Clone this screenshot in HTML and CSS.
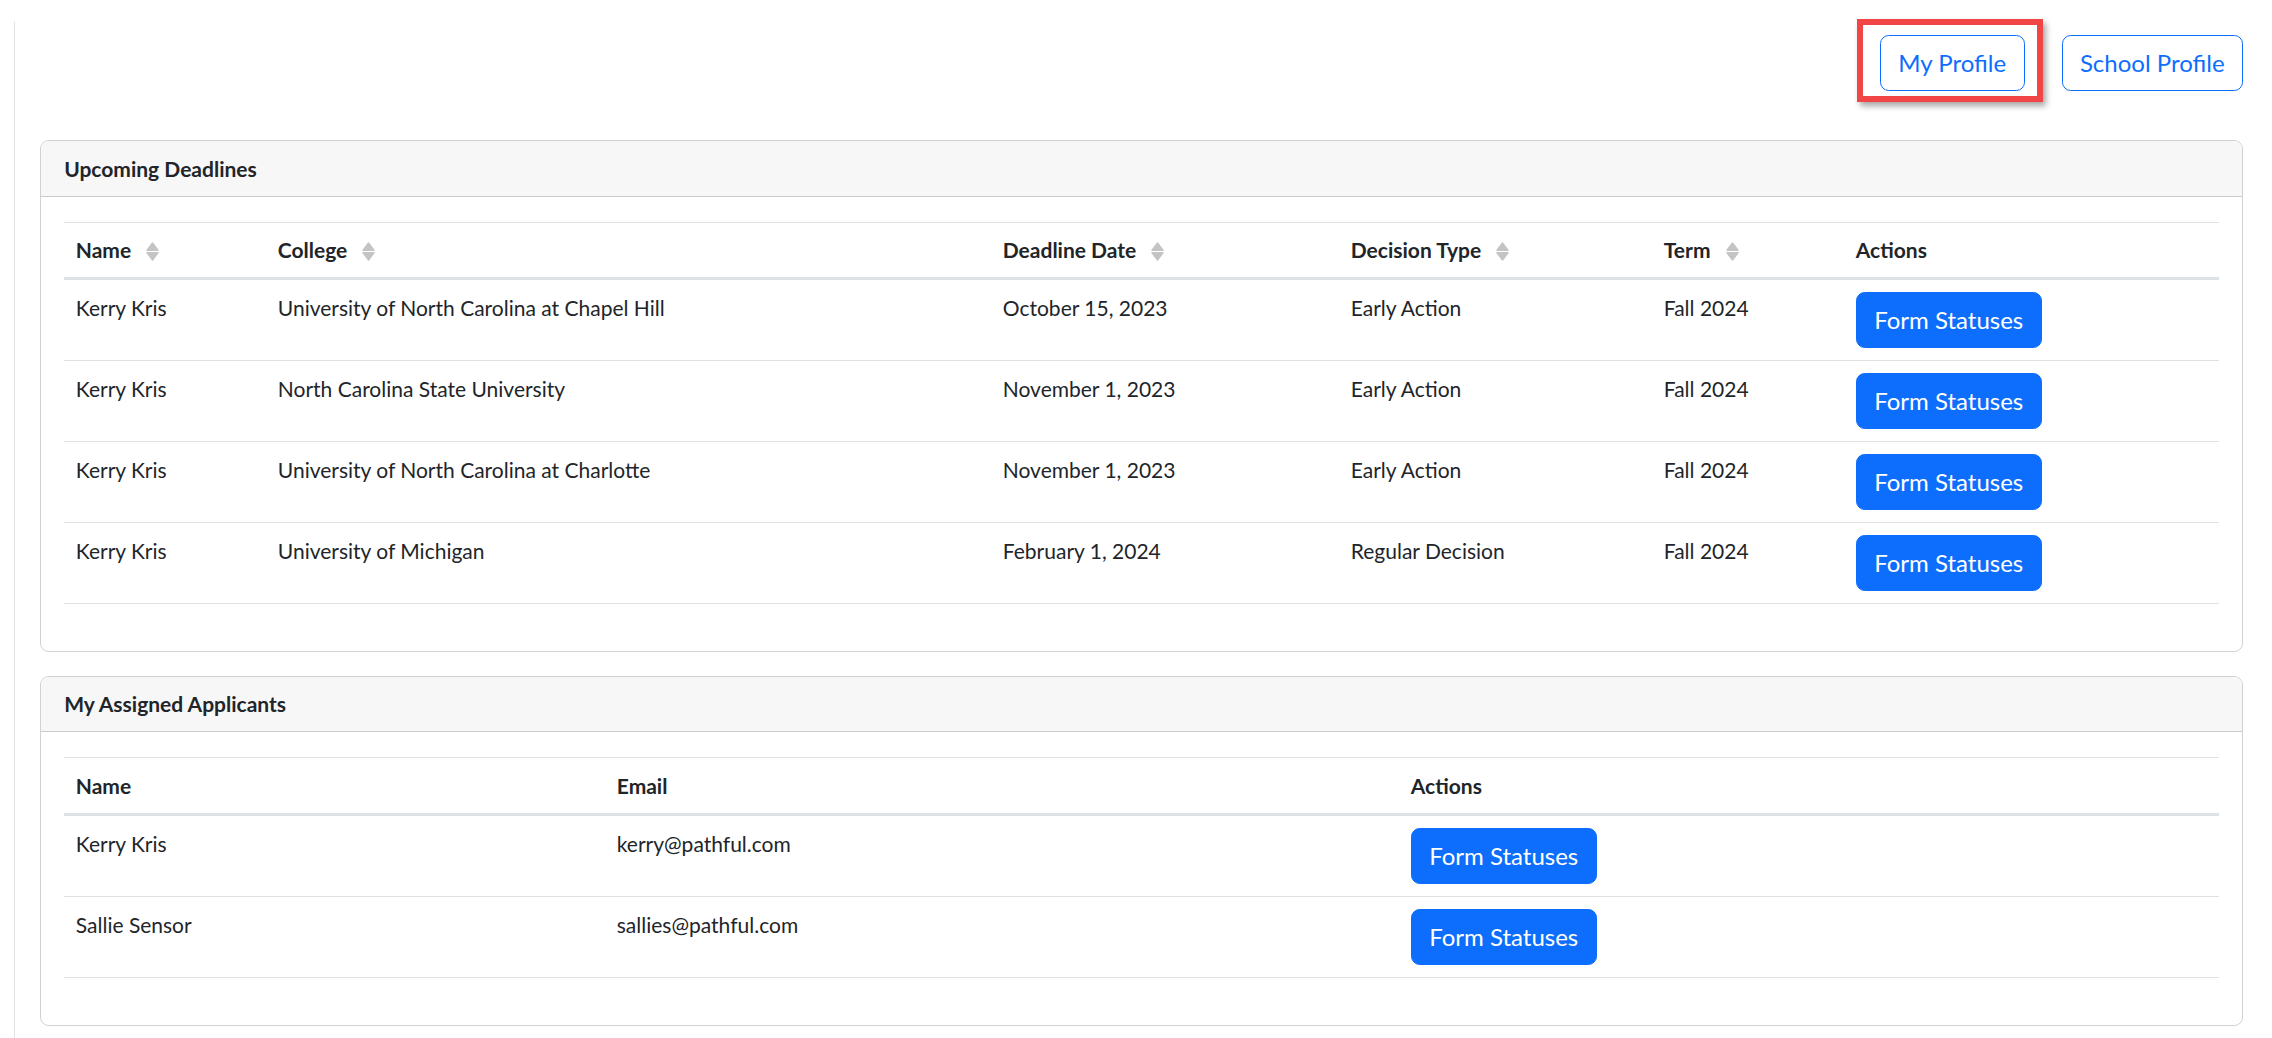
FILE: index.html
```html
<!DOCTYPE html>
<html lang="en">
<head>
    <meta charset="UTF-8">
    <meta name="viewport" content="width=device-width, initial-scale=1.0">
    <title>Counselor Dashboard</title>
    <link rel="stylesheet" href="styles.css">
</head>
<body>

<div class="main">
    <div class="toolbar">
        <span class="highlight">
            <button class="btn btn-outline">My Profile</button>
        </span>
        <button class="btn btn-outline">School Profile</button>
    </div>

    <div class="card">
        <div class="card-header">Upcoming Deadlines</div>
        <div class="card-body">
            <table class="table">
                <colgroup>
                    <col style="width: 202px">
                    <col style="width: 725px">
                    <col style="width: 348px">
                    <col style="width: 313px">
                    <col style="width: 192px">
                    <col>
                </colgroup>
                <thead>
                    <tr>
                        <th>Name <svg class="sort" viewBox="0 0 13 19"><path d="M6.5 1 L12 8.2 L1 8.2 Z M1 10.8 L12 10.8 L6.5 18 Z"/></svg></th>
                        <th>College <svg class="sort" viewBox="0 0 13 19"><path d="M6.5 1 L12 8.2 L1 8.2 Z M1 10.8 L12 10.8 L6.5 18 Z"/></svg></th>
                        <th>Deadline Date <svg class="sort" viewBox="0 0 13 19"><path d="M6.5 1 L12 8.2 L1 8.2 Z M1 10.8 L12 10.8 L6.5 18 Z"/></svg></th>
                        <th>Decision Type <svg class="sort" viewBox="0 0 13 19"><path d="M6.5 1 L12 8.2 L1 8.2 Z M1 10.8 L12 10.8 L6.5 18 Z"/></svg></th>
                        <th>Term <svg class="sort" viewBox="0 0 13 19"><path d="M6.5 1 L12 8.2 L1 8.2 Z M1 10.8 L12 10.8 L6.5 18 Z"/></svg></th>
                        <th>Actions</th>
                    </tr>
                </thead>
                <tbody>
                    <tr>
                        <td>Kerry Kris</td>
                        <td>University of North Carolina at Chapel Hill</td>
                        <td>October 15, 2023</td>
                        <td>Early Action</td>
                        <td>Fall 2024</td>
                        <td><button class="btn btn-primary">Form Statuses</button></td>
                    </tr>
                    <tr>
                        <td>Kerry Kris</td>
                        <td>North Carolina State University</td>
                        <td>November 1, 2023</td>
                        <td>Early Action</td>
                        <td>Fall 2024</td>
                        <td><button class="btn btn-primary">Form Statuses</button></td>
                    </tr>
                    <tr>
                        <td>Kerry Kris</td>
                        <td>University of North Carolina at Charlotte</td>
                        <td>November 1, 2023</td>
                        <td>Early Action</td>
                        <td>Fall 2024</td>
                        <td><button class="btn btn-primary">Form Statuses</button></td>
                    </tr>
                    <tr>
                        <td>Kerry Kris</td>
                        <td>University of Michigan</td>
                        <td>February 1, 2024</td>
                        <td>Regular Decision</td>
                        <td>Fall 2024</td>
                        <td><button class="btn btn-primary">Form Statuses</button></td>
                    </tr>
                </tbody>
            </table>
        </div>
    </div>

    <div class="card">
        <div class="card-header">My Assigned Applicants</div>
        <div class="card-body">
            <table class="table">
                <colgroup>
                    <col style="width: 541px">
                    <col style="width: 794px">
                    <col>
                </colgroup>
                <thead>
                    <tr>
                        <th>Name</th>
                        <th>Email</th>
                        <th>Actions</th>
                    </tr>
                </thead>
                <tbody>
                    <tr>
                        <td>Kerry Kris</td>
                        <td>kerry@pathful.com</td>
                        <td><button class="btn btn-primary">Form Statuses</button></td>
                    </tr>
                    <tr>
                        <td>Sallie Sensor</td>
                        <td>sallies@pathful.com</td>
                        <td><button class="btn btn-primary">Form Statuses</button></td>
                    </tr>
                </tbody>
            </table>
        </div>
    </div>
</div>

</body>
</html>
```

FILE: styles.css
```css
body {
    margin: 0;
    font-family: Lato, "Open Sans", sans-serif;
    font-size: 21px;
    line-height: 1.5;
    color: #212529;
    background-color: #fff;
}
.main {
    margin: 22px 0 0 14px;
    min-height: 1016px;
    box-sizing: border-box;
    border-left: 1px solid #e3e3e3;
    padding: 13px 29px 10px 25px;
}
.toolbar {
    display: flex;
    justify-content: flex-end;
    gap: 37px;
    margin-bottom: 49px;
}
.highlight {
    position: relative;
    display: inline-block;
}
.highlight::after {
    content: "";
    position: absolute;
    top: -16px;
    left: -23px;
    right: -18px;
    bottom: -11px;
    border: 6.5px solid #f24646;
    box-shadow: 3px 4px 6px rgba(0, 0, 0, 0.35);
    pointer-events: none;
}
.btn {
    display: inline-block;
    font-family: Lato, "Open Sans", sans-serif;
    font-size: 24px;
    line-height: 1.5;
    padding: 9px 17.4px;
    border: 1px solid #0d6efd;
    border-radius: 8.7px;
    cursor: pointer;
}
.btn-outline {
    background-color: #fff;
    color: #0d6efd;
}
.btn-primary {
    background-color: #0d6efd;
    color: #fff;
}
.card {
    border: 1px solid rgba(0, 0, 0, 0.175);
    border-radius: 8.7px;
    margin-bottom: 24px;
    overflow: hidden;
}
.card-header {
    background-color: #f7f7f7;
    border-bottom: 1px solid rgba(0, 0, 0, 0.175);
    padding: 11.6px 23.2px;
    font-weight: 700;
}
.card-body {
    padding: 25px 23.2px 23.2px;
}
.table {
    width: 100%;
    table-layout: fixed;
    border-collapse: collapse;
    border-top: 1px solid #dee2e6;
    margin-bottom: 23.2px;
}
.table th,
.table td {
    text-align: left;
    padding: 12px 11.6px;
    border-bottom: 1px solid #dee2e6;
}
.table th {
    font-weight: 700;
    vertical-align: bottom;
    padding: 11.6px;
    border-bottom: 3px solid #dee2e6;
}
.table td {
    vertical-align: top;
}
.sort {
    width: 13px;
    height: 19px;
    margin-left: 10px;
    vertical-align: -3px;
    fill: #c4c4c4;
    stroke: #c4c4c4;
    stroke-width: 1.4;
    stroke-linejoin: round;
}
```
